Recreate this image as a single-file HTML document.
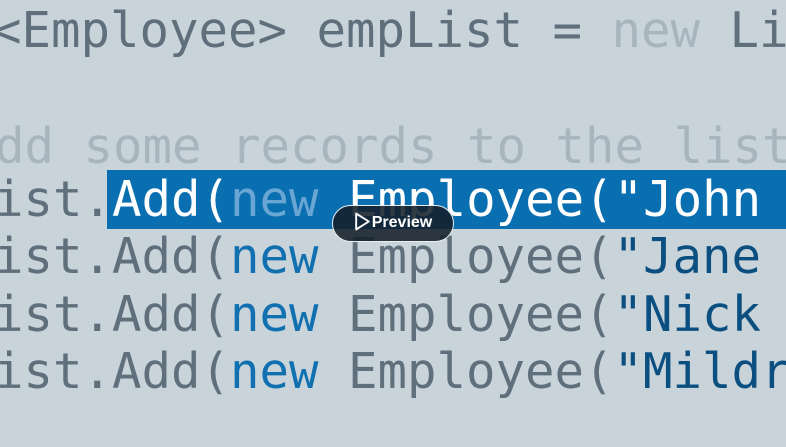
<!DOCTYPE html>
<html><head><meta charset="utf-8"><style>
html,body{margin:0;padding:0;}
body{width:786px;height:447px;overflow:hidden;background:#c9d3da;position:relative;font-family:"DejaVu Sans Mono","Liberation Mono",monospace;}
#wrap{position:absolute;left:0;top:0;width:786px;height:447px;overflow:hidden;}
.l{position:absolute;left:-6px;font-size:49px;line-height:58px;height:58px;white-space:pre;color:#5f6f7c;}
.c{color:#a8b5be}
.n{color:#1170b0}
.s{color:#0b4f80}
.hl{position:absolute;left:107px;top:170px;width:679px;height:59px;background:#0a6fb0;}
.w{color:#fff}
.hn{color:#6aa6d3}
.btn{position:absolute;left:332px;top:205px;width:122px;height:37px;border-radius:19px;background:rgba(20,32,42,0.88);border:1.5px solid #e8eef2;box-sizing:border-box;color:#fff;font-family:"Liberation Sans",sans-serif;font-weight:bold;font-size:16px;line-height:34px;text-align:center;}
.btn svg{vertical-align:-4px;margin-right:1px}
</style></head><body><div id="wrap">
<div class="l" style="top:2px;left:-8px">&lt;Employee&gt; empList = <span class="c">new</span> List</div>
<div class="l c" style="top:118px;left:-5px">dd some records to the list</div>
<div class="hl"></div>
<div class="l" style="top:171px">ist.<span class="w">Add(</span><span class="hn">new</span> <span class="w">Employee("John</span></div>
<div class="l" style="top:228px">ist.Add(<span class="n">new</span> Employee(<span class="s">"Jane</span></div>
<div class="l" style="top:286px">ist.Add(<span class="n">new</span> Employee(<span class="s">"Nick</span></div>
<div class="l" style="top:343px">ist.Add(<span class="n">new</span> Employee(<span class="s">"Mildr</span></div>
<div class="btn"><svg width="17" height="19" viewBox="0 0 16 18"><path d="M2 1.5 L14 9 L2 16.5 Z" fill="none" stroke="#fff" stroke-width="1.8" stroke-linejoin="round"/></svg>Preview</div>
</div></body></html>
